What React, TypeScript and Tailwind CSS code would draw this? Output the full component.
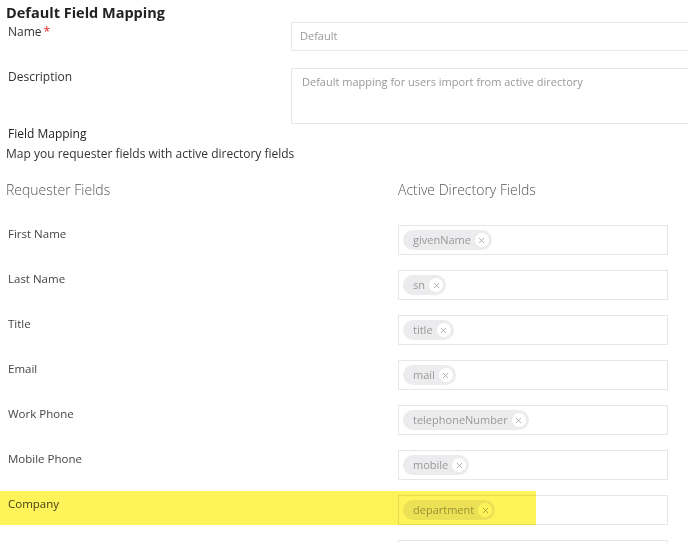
import { X } from 'lucide-react';

const mappings = [
  { label: 'First Name', value: 'givenName' },
  { label: 'Last Name', value: 'sn' },
  { label: 'Title', value: 'title' },
  { label: 'Email', value: 'mail' },
  { label: 'Work Phone', value: 'telephoneNumber' },
  { label: 'Mobile Phone', value: 'mobile' },
  { label: 'Company', value: 'department' },
  { label: '', value: '' },
];

function Chip({ value }: { value: string }) {
  return (
    <span className="inline-flex h-5 items-center rounded-full bg-[#ececee] pl-[10px] pr-[3px] text-[11px] text-[#999]">
      {value}
      <span className="ml-[4px] flex h-[14px] w-[14px] items-center justify-center rounded-full bg-white text-[#999]">
        <X className="h-[9px] w-[9px]" strokeWidth={2} />
      </span>
    </span>
  );
}

export default function App() {
  return (
    <div
      className="relative h-[543px] w-[688px] overflow-hidden bg-white text-[#333]"
      style={{ fontFamily: '"Open Sans", "Noto Sans", sans-serif' }}
    >
      <h1 className="pl-[6px] text-[14.5px] font-bold leading-[26px] text-[#222]">
        Default Field Mapping
      </h1>

      <div className="mt-[-3px] flex">
        <div className="w-[291px] shrink-0 pl-[8px] text-[12px] leading-[18px] text-[#333]">
          Name<span className="ml-[2px] text-[#e02424]">*</span>
        </div>
        <div className="mt-[-1px] flex h-[29px] w-[420px] shrink-0 items-center border border-[#e8e8e8] px-[8px] text-[11px] text-[#999]">
          Default
        </div>
      </div>

      <div className="mt-[17px] flex">
        <div className="w-[291px] shrink-0 pl-[8px] text-[12px] leading-[18px] text-[#333]">
          Description
        </div>
        <div className="h-[56px] w-[420px] shrink-0 border border-[#e8e8e8] px-[10px] pt-[5px] text-[11px] text-[#999]">
          Default mapping for users import from active directory
        </div>
      </div>

      <div className="mt-[1px] pl-[8px] text-[12px] font-medium leading-[18px] text-[#222]">
        Field Mapping
      </div>
      <div className="mt-[2px] pl-[6px] text-[12px] leading-[18px] text-[#333]">
        Map you requester fields with active directory fields
      </div>

      <div className="mt-[17px] flex text-[14px] font-light leading-[20px] text-[#555]">
        <div className="w-[398px] shrink-0 pl-[6px]">Requester Fields</div>
        <div>Active Directory Fields</div>
      </div>

      <div className="mt-[25px] flex flex-col gap-[15px]">
        {mappings.map((m, i) => (
          <div key={i} className="flex">
            <div className="w-[398px] shrink-0 pl-[8px] pt-[1px] text-[11.5px] leading-[16px] text-[#444]">
              {m.label}
            </div>
            <div className="flex h-[30px] w-[270px] shrink-0 items-center border border-[#e6e6e6] pl-[4px]">
              {m.value && <Chip value={m.value} />}
            </div>
          </div>
        ))}
      </div>

      <div className="pointer-events-none absolute left-0 top-[491px] h-[34px] w-[536px] bg-[#fff35a] mix-blend-multiply" />
    </div>
  );
}
